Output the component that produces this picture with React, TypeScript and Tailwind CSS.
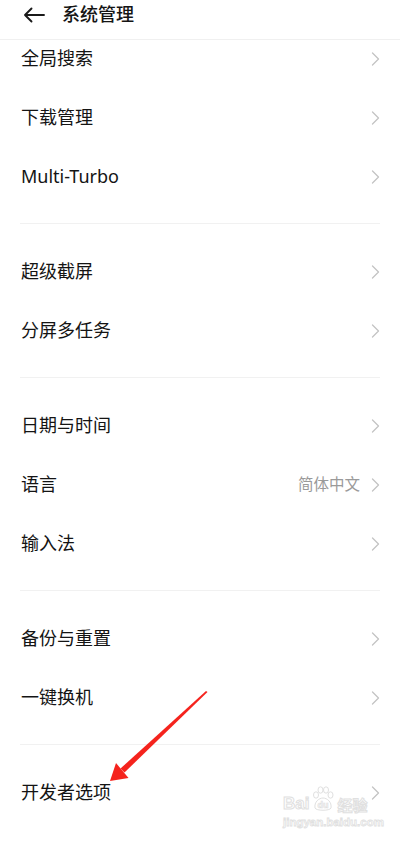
import React from "react";

const Chevron = () => (
  <svg width="9" height="14" viewBox="0 0 9 14" fill="none" className="shrink-0">
    <path d="M1.5 1 L7.5 7 L1.5 13" stroke="#c4c4c4" strokeWidth="1.3" strokeLinecap="round" strokeLinejoin="round" />
  </svg>
);

const Row = ({ label, value }: { label: string; value?: string }) => (
  <div className="flex h-[59px] items-center justify-between pl-[21px] pr-[20px]">
    <span className="text-[18px] text-[#141414]">{label}</span>
    <div className="flex items-center gap-[11px]">
      {value && <span className="text-[15.5px] text-[#9a9a9a]">{value}</span>}
      <Chevron />
    </div>
  </div>
);

const Divider = () => (
  <div className="mx-[20px] mt-[17px] mb-[18px] h-px bg-[#f1f1f1]" />
);

const groups: { label: string; value?: string }[][] = [
  [{ label: "全局搜索" }, { label: "下载管理" }, { label: "Multi-Turbo" }],
  [{ label: "超级截屏" }, { label: "分屏多任务" }],
  [{ label: "日期与时间" }, { label: "语言", value: "简体中文" }, { label: "输入法" }],
  [{ label: "备份与重置" }, { label: "一键换机" }],
  [{ label: "开发者选项" }],
];

export default function App() {
  return (
    <div
      className="relative h-[843px] w-[400px] overflow-hidden bg-white"
      style={{ fontFamily: '"Noto Sans", "Noto Sans CJK SC", sans-serif' }}
    >
      <div className="relative z-10 h-[40px] border-b border-[#f0f0f0] bg-white">
        <div className="flex h-[29px] items-center">
          <svg width="22" height="16" viewBox="0 0 22 16" fill="none" className="ml-[23px]">
            <path d="M21 8 H2 M8.5 1.5 L2 8 L8.5 14.5" stroke="#1a1a1a" strokeWidth="1.9" strokeLinecap="round" strokeLinejoin="round" />
          </svg>
          <span className="ml-[17px] text-[18px] font-medium text-[#141414]">系统管理</span>
        </div>
      </div>
      <div className="-mt-[11px]">
        {groups.map((g, i) => (
          <div key={i}>
            {i > 0 && <Divider />}
            {g.map((r) => (
              <Row key={r.label} label={r.label} value={r.value} />
            ))}
          </div>
        ))}
      </div>

      {/* Baidu watermark */}
      <div className="pointer-events-none absolute left-[283px] top-[786px] flex flex-col">
        <div className="flex items-end">
          <span
            className="text-[17px] font-bold leading-none text-white"
            style={{ fontFamily: '"Liberation Sans", sans-serif', WebkitTextStroke: "1px #e0e0e0" }}
          >
            Bai
          </span>
          <svg width="26" height="26" viewBox="0 0 26 26" className="mx-[1px]">
            <g fill="none" stroke="#e0e0e0" strokeWidth="1">
              <ellipse cx="6" cy="9" rx="2.5" ry="3.2" />
              <ellipse cx="10.5" cy="4" rx="2.5" ry="3.2" />
              <ellipse cx="16" cy="4" rx="2.5" ry="3.2" />
              <ellipse cx="20.5" cy="9" rx="2.5" ry="3.2" />
              <path d="M5 22 C4 16 9 12 13 12 C17 12 22 16 21 22 C20 25 6 25 5 22 Z" />
            </g>
            <text x="13" y="22" textAnchor="middle" fontSize="9" fontWeight="bold" fill="none" stroke="#e0e0e0" strokeWidth="0.7" fontFamily="Liberation Sans, sans-serif">du</text>
          </svg>
          <span
            className="text-[15px] font-bold leading-none text-white"
            style={{ fontFamily: '"Noto Sans CJK SC", sans-serif', WebkitTextStroke: "1px #e0e0e0" }}
          >
            经验
          </span>
        </div>
        <span
          className="mt-[5px] text-[11.5px] font-bold leading-none text-white"
          style={{ fontFamily: '"Liberation Sans", sans-serif', WebkitTextStroke: "0.8px #e0e0e0" }}
        >
          jingyan.baidu.com
        </span>
      </div>

      {/* red arrow annotation */}
      <svg className="pointer-events-none absolute left-0 top-0" width="400" height="843" viewBox="0 0 400 843">
        <path d="M207.5 692 L206 691 L120.5 768.5 L124.5 772.5 Z" fill="#f5231d" />
        <path d="M110 781 L116 763 L128.5 778 Z" fill="#f5231d" />
      </svg>
    </div>
  );
}
